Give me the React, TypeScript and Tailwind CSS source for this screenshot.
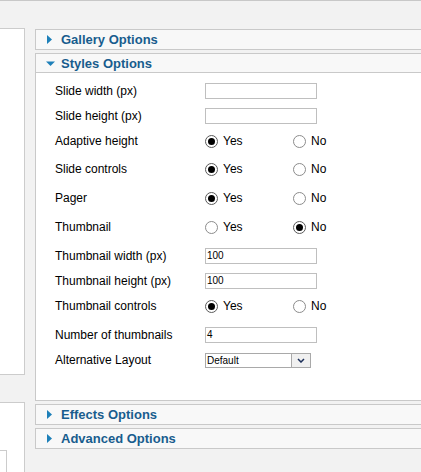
import React from 'react';

// Row definitions for the "Styles Options" panel
interface Row {
  label: string;
  kind: 'input' | 'radio' | 'select';
  value?: string;
  yes?: boolean;
  h: string;
}

const rows: Row[] = [
  { label: 'Slide width (px)', kind: 'input', value: '', h: 'h-[26px]' },
  { label: 'Slide height (px)', kind: 'input', value: '', h: 'h-[24px]' },
  { label: 'Adaptive height', kind: 'radio', yes: true, h: 'h-[26px]' },
  { label: 'Slide controls', kind: 'radio', yes: true, h: 'h-[30px]' },
  { label: 'Pager', kind: 'radio', yes: true, h: 'h-[28px]' },
  { label: 'Thumbnail', kind: 'radio', yes: false, h: 'h-[30px]' },
  { label: 'Thumbnail width (px)', kind: 'input', value: '100', h: 'h-[28px]' },
  { label: 'Thumbnail height (px)', kind: 'input', value: '100', h: 'h-[22px]' },
  { label: 'Thumbnail controls', kind: 'radio', yes: true, h: 'h-[28px]' },
  { label: 'Number of thumbnails', kind: 'input', value: '4', h: 'h-[30px]' },
  { label: 'Alternative Layout', kind: 'select', value: 'Default', h: 'h-[20px]' },
];

const Arrow = ({ open }: { open?: boolean }) =>
  open ? (
    <svg width="9" height="9" viewBox="0 0 9 9" className="shrink-0 -ml-[1px]">
      <path d="M0 2.5 H9 L4.5 7 Z" fill="#1e80b9" />
    </svg>
  ) : (
    <svg width="8" height="9" viewBox="0 0 8 9" className="shrink-0">
      <path d="M0 0 L5 4.5 L0 9 Z" fill="#1e80b9" />
    </svg>
  );

const Header = ({ title, open }: { title: string; open?: boolean }) => (
  <div className={`flex items-center gap-[6px] pl-[11px] bg-[#f8f8f8] ${open ? 'h-[18px]' : 'h-[19px]'}`}>
    <Arrow open={open} />
    <span className="text-[13px] font-bold leading-none text-[#185d8e]">{title}</span>
  </div>
);

const ClosedPanel = ({ title }: { title: string }) => (
  <div className="border border-[#c9c9c9]">
    <Header title={title} />
  </div>
);

const Radio = ({ checked }: { checked: boolean }) => (
  <span
    className={`flex items-center justify-center w-[13px] h-[13px] rounded-full border bg-white ${checked ? 'border-[#5a5a5a]' : 'border-[#8c8c8c]'}`}
  >
    {checked && <span className="w-[7px] h-[7px] rounded-full bg-black" />}
  </span>
);

const Control = ({ row }: { row: Row }) => {
  if (row.kind === 'input') {
    return (
      <div className="w-[112px] h-[16px] border border-[#bfbfbf] bg-white pl-[1px] text-[10px] leading-[14px] text-black">
        {row.value}
      </div>
    );
  }
  if (row.kind === 'select') {
    return (
      <div className="flex w-[106px] h-[15px] border border-[#a9a9a9] bg-white text-[10px] leading-[13px] text-black">
        <span className="flex-1 pl-[1px]">{row.value}</span>
        <span className="flex items-center justify-center w-[19px] border-l border-[#a9a9a9] bg-[#f0f0f0]">
          <svg width="8" height="5" viewBox="0 0 8 5">
            <path d="M1 1 L4 4 L7 1" fill="none" stroke="#1c2f5a" strokeWidth="1.5" />
          </svg>
        </span>
      </div>
    );
  }
  return (
    <div className="flex items-center text-[12px] text-black">
      <div className="flex items-center gap-[5px] w-[88px]">
        <Radio checked={!!row.yes} />
        <span>Yes</span>
      </div>
      <div className="flex items-center gap-[5px]">
        <Radio checked={!row.yes} />
        <span>No</span>
      </div>
    </div>
  );
};

export default function App() {
  return (
    <div className="w-[421px] h-[472px] overflow-hidden bg-[#f2f2f2] border-t border-[#c8c8c8] font-['Liberation_Sans',Arial,sans-serif]">
      <div className="flex gap-[10px] pt-[27px]">
        {/* left column */}
        <div className="flex flex-col w-[25px] shrink-0">
          <div className="h-[347px] bg-white border-y border-r border-[#cccccc]" />
          <div className="h-[80px] mt-[27px] bg-white border-t border-r border-[#cccccc] pt-[47px]">
            <div className="w-[7px] h-[30px] border-r border-t border-[#cccccc] bg-white" />
          </div>
        </div>

        {/* right column */}
        <div className="flex flex-col gap-[3px] w-[420px] shrink-0 pt-[1px]">
          <ClosedPanel title="Gallery Options" />

          <div className="border border-[#c9c9c9]">
            <div className="border-b border-[#c9c9c9]">
              <Header title="Styles Options" open />
            </div>
            <div className="h-[327px] bg-white pt-[5px] pl-[19px]">
              {rows.map((row) => (
                <div key={row.label} className={`flex items-center ${row.h}`}>
                  <span className="w-[150px] shrink-0 text-[12px] text-black">{row.label}</span>
                  <Control row={row} />
                </div>
              ))}
            </div>
          </div>

          <ClosedPanel title="Effects Options" />
          <ClosedPanel title="Advanced Options" />
        </div>
      </div>
    </div>
  );
}
